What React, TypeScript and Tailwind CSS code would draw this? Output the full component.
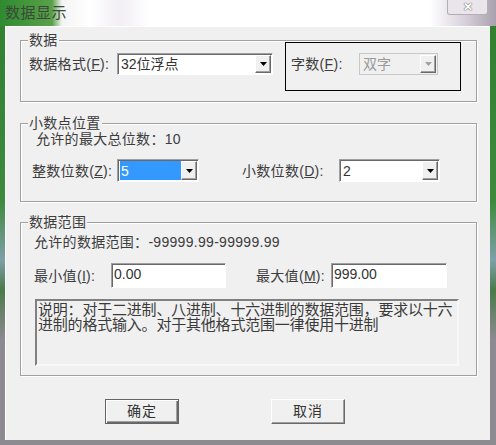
import React from "react";

const FONT = { fontFamily: '"Liberation Sans", "Noto Sans CJK SC", sans-serif' };

const Arrow = ({ disabled }: { disabled?: boolean }) => (
  <div className="flex h-full w-[16px] items-center justify-center border border-t-white border-l-white border-r-[#696969] border-b-[#696969] bg-[#f0f0f0] shadow-[inset_-1px_-1px_0_#a0a0a0]">
    <svg width="7" height="4" viewBox="0 0 7 4">
      <path d="M0 0h7L3.5 4z" fill={disabled ? "#a0a0a0" : "#000"} />
    </svg>
  </div>
);

const Select = ({
  value,
  width,
  height = 22,
  selected,
  disabled,
}: {
  value: string;
  width: number;
  height?: number;
  selected?: boolean;
  disabled?: boolean;
}) => (
  <div
    className={`flex border p-[1px] ${
      disabled
        ? "border-[#c8c8c8] bg-[#f0f0f0]"
        : "border-t-[#a0a0a0] border-l-[#a0a0a0] border-r-white border-b-white bg-white shadow-[inset_1px_1px_0_#696969]"
    }`}
    style={{ width, height }}
  >
    <div className="flex flex-1 items-center pl-[1px]">
      <span
        className={`flex h-full flex-1 items-center pl-[1px] text-[14px] leading-none ${
          selected ? "bg-[#3399ff] text-white" : disabled ? "text-[#9a9a9a]" : "text-[#333]"
        }`}
      >
        {value}
      </span>
    </div>
    <Arrow disabled={disabled} />
  </div>
);

const Input = ({ value, width }: { value: string; width: number }) => (
  <div
    className="flex h-[25px] items-start border border-t-[#a0a0a0] border-l-[#a0a0a0] border-r-white border-b-white bg-white pl-[2px] pt-[2px] text-[14px] leading-[16px] text-[#333] shadow-[inset_1px_1px_0_#696969]"
    style={{ width }}
  >
    {value}
  </div>
);

const Label = ({ text, mn, width }: { text: string; mn: string; width: number }) => (
  <span className="shrink-0 text-[14px] leading-[16px] tracking-[0.3px] text-[#3c3c3c]" style={{ width }}>
    {text}(<span className="underline">{mn}</span>):
  </span>
);

const Group = ({
  title,
  height,
  children,
}: {
  title: string;
  height: number;
  children: React.ReactNode;
}) => (
  <div
    className="relative border border-[#a0a0a0] shadow-[inset_1px_1px_0_#fff,1px_1px_0_#fff]"
    style={{ height }}
  >
    <span className="absolute left-[7px] top-[-9px] bg-[#f0f0f0] px-[1px] text-[14px] leading-[16px] tracking-[0.3px] text-[#3c3c3c]">
      {title}
    </span>
    {children}
  </div>
);

const Button = ({ text, isDefault }: { text: string; isDefault?: boolean }) => (
  <button
    className={`flex h-[25px] w-[74px] items-center justify-center bg-[#f0f0f0] text-[14px] tracking-[1px] text-[#333] ${
      isDefault
        ? "border border-[#646464] shadow-[inset_1px_1px_0_#fff,inset_-1px_-1px_0_#696969,inset_-2px_-2px_0_#a0a0a0]"
        : "border border-t-white border-l-white border-r-[#696969] border-b-[#696969] shadow-[inset_-1px_-1px_0_#a0a0a0]"
    }`}
  >
    {text}
  </button>
);

export default function App() {
  return (
    <div
      className="h-[445px] w-[496px] overflow-hidden bg-[linear-gradient(180deg,#2f7f2f_0px,#3d8a3d_200px,#7fa0a8_260px,#4a7a4a_290px,#8e8a92_340px,#8e8a92_445px)]"
      style={FONT}
    >
      {/* Title bar */}
      <div className="flex h-[26px] items-start justify-between bg-[linear-gradient(90deg,#2f8a2f_0px,#5aa04a_52px,#f4f4f4_62px,#ffffff_90px,#f2eef4_120px,#ffffff_150px,#ffffff_430px,#d8d0da_465px,#a8a0ac_496px)]">
        <span className="ml-[5px] mt-[5px] text-[15px] leading-[16px] tracking-[0.5px] text-[#3a4a3a]">数据显示</span>
        <div className="mr-[8px] flex h-[15px] w-[41px] items-center justify-center rounded-b-[3px] border border-t-0 border-[#b4acb6] bg-[#e9e5ea] text-[12px] font-bold leading-none text-white [text-shadow:0_0_1px_#555,0_0_1px_#555]">
          ✕
        </div>
      </div>

      {/* Client area */}
      <div className="ml-[5px] h-[414px] w-[485px] border-t border-l border-white bg-[#f0f0f0] pl-[14px] pr-[13px] pt-[13px]">
        {/* 数据 */}
        <Group title="数据" height={62}>
          <div className="flex items-start pl-[8px]">
            <div className="mt-[12px] flex items-center">
              <Label text="数据格式" mn="F" width={88} />
              <Select value="32位浮点" width={156} />
            </div>
            <div className="ml-[12px] mt-[1px] flex h-[49px] w-[176px] items-start border border-black pl-[5px] pt-[10px]">
              <div className="flex items-center">
                <Label text="字数" mn="F" width={68} />
                <Select value="双字" width={79} disabled />
              </div>
            </div>
          </div>
        </Group>

        {/* 小数点位置 */}
        <div className="mt-[21px]">
          <Group title="小数点位置" height={79}>
            <div className="pl-[15px] pt-[7px] text-[14px] leading-[16px] tracking-[0.3px] text-[#3c3c3c]">
              允许的最大总位数：10
            </div>
            <div className="mt-[12px] flex items-center pl-[11px]">
              <Label text="整数位数" mn="Z" width={85} />
              <Select value="5" width={82} height={23} selected />
              <div className="ml-[43px] flex items-center">
                <Label text="小数位数" mn="D" width={97} />
                <Select value="2" width={101} height={23} />
              </div>
            </div>
          </Group>
        </div>

        {/* 数据范围 */}
        <div className="mt-[20px]">
          <Group title="数据范围" height={154}>
            <div className="pl-[13px] pt-[11px] text-[14px] leading-[16px] tracking-[0.3px] text-[#3c3c3c]">
              允许的数据范围：-99999.99-99999.99
            </div>
            <div className="mt-[13px] flex items-center pl-[13px]">
              <Label text="最小值" mn="I" width={77} />
              <Input value="0.00" width={115} />
              <div className="ml-[30px] flex items-center">
                <Label text="最大值" mn="M" width={75} />
                <Input value="999.00" width={116} />
              </div>
            </div>
            <div className="ml-[14px] mt-[11px] h-[67px] w-[424px] border-2 border-t-[#808080] border-l-[#808080] border-b-[#f8f8f8] border-r-[#f8f8f8] pl-[1px] pt-[1px] text-[15px] leading-[15px] tracking-[-0.2px] text-[#3a3a3a]">
              说明：对于二进制、八进制、十六进制的数据范围，要求以十六进制的格式输入。对于其他格式范围一律使用十进制
            </div>
          </Group>
        </div>

        {/* Buttons */}
        <div className="mt-[23px] flex pl-[85px]">
          <Button text="确定" isDefault />
          <div className="ml-[92px]">
            <Button text="取消" />
          </div>
        </div>
      </div>
    </div>
  );
}
